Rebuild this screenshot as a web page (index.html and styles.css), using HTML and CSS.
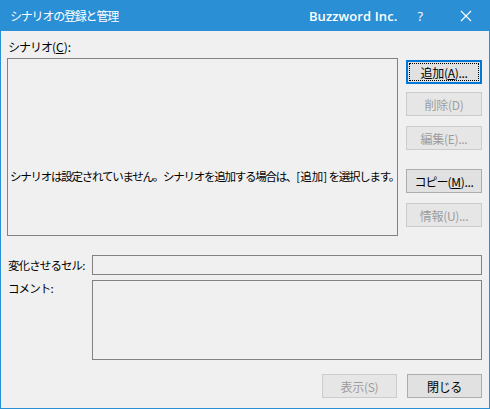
FILE: index.html
```html
<!DOCTYPE html>
<html lang="ja">
<head>
<meta charset="utf-8">
<title>シナリオの登録と管理</title>
<link rel="stylesheet" href="styles.css">
</head>
<body>
<div class="window">
  <div class="titlebar">
    <span class="title">シナリオの登録と管理</span>
    <span class="brand">Buzzword Inc.</span>
    <span class="help">?</span>
    <span class="close">
      <svg width="12" height="12" viewBox="0 0 12 12"><path d="M1 1 L11 11 M11 1 L1 11" stroke="#fff" stroke-width="1.2" fill="none"/></svg>
    </span>
  </div>
  <div class="content">
    <div class="caption"><span class="kana">シナリオ</span>(<u>C</u>):</div>
    <div class="main-row">
      <div class="listbox">
        <span class="empty-msg">シナリオは設定されていません。シナリオを追加する場合は、<span class="bracket">[追加]</span> を選択します。</span>
      </div>
      <div class="side-buttons">
        <button class="btn default"><span class="focus">追加(<u>A</u>)...</span></button>
        <button class="btn disabled gap-s">削除(D)</button>
        <button class="btn disabled gap-m">編集(E)...</button>
        <button class="btn gap-l"><span class="kana">コピー</span>(<u>M</u>)...</button>
        <button class="btn disabled gap-m">情報(U)...</button>
      </div>
    </div>
    <div class="field-row cells">
      <label class="field-label">変化させるセル:</label>
      <div class="input"></div>
    </div>
    <div class="field-row comment">
      <label class="field-label">コメント:</label>
      <div class="textarea"></div>
    </div>
    <div class="footer">
      <button class="btn disabled">表示(S)</button>
      <button class="btn">閉じる</button>
    </div>
  </div>
</div>
</body>
</html>
```

FILE: styles.css
```css
* { box-sizing: border-box; }

html, body {
  margin: 0;
  padding: 0;
  background: #f0f0f0;
}

body {
  font-family: "Noto Sans CJK JP", "Noto Sans", sans-serif;
  font-size: 12px;
  color: #000;
}

.window {
  width: 490px;
  height: 409px;
  border: 1px solid #2b8fd5;
  border-top: 0;
  background: #f0f0f0;
  display: flex;
  flex-direction: column;
}

.titlebar {
  height: 31px;
  background: #2b8fd5;
  color: #fff;
  display: flex;
  align-items: center;
  margin: 0 -1px;
  padding-left: 10px;
}

.title {
  font-size: 12px;
  letter-spacing: -1.2px;
  flex: 1;
}

.brand {
  font-family: "Open Sans", "Liberation Sans", sans-serif;
  font-weight: 600;
  font-size: 13px;
  letter-spacing: 0.1px;
}

.help {
  font-family: "Open Sans", "Liberation Sans", sans-serif;
  font-size: 13px;
  margin-left: 20px;
}

.close {
  display: flex;
  margin-left: 37px;
  margin-right: 18px;
}

.content {
  padding: 0 6px 0 6px;
  display: flex;
  flex-direction: column;
  flex: 1;
}

.kana {
  letter-spacing: -1px;
}

.caption {
  margin-top: 7px;
  height: 20px;
  line-height: 18px;
  padding-left: 1px;
}

.main-row {
  display: flex;
  gap: 8px;
}

/* empty list: the hint sits in the lower part of the box */
.listbox {
  width: 391px;
  height: 178px;
  border: 1px solid #828282;
  padding: 108px 0 0 2px;
  overflow: hidden;
  line-height: 17px;
}

.empty-msg {
  font-size: 11.5px;
  letter-spacing: -1.25px;
  white-space: nowrap;
}

.bracket {
  letter-spacing: 0;
}

.side-buttons {
  display: flex;
  flex-direction: column;
  padding-top: 2px;
}

.btn {
  width: 76px;
  height: 24px;
  border: 1px solid #adadad;
  background: #e1e1e1;
  font-family: inherit;
  font-size: 12px;
  color: #000;
  padding: 0;
  margin: 0;
  letter-spacing: -0.3px;
  display: flex;
  align-items: center;
  justify-content: center;
}

.btn.default {
  border: 2px solid #0078d7;
  padding: 1px;
}

.btn .focus {
  flex: 1;
  align-self: stretch;
  display: flex;
  align-items: center;
  justify-content: center;
  outline: 1px dotted #000;
  outline-offset: -1px;
}

.btn.disabled {
  background: #e6e6e6;
  border-color: #cccccc;
  color: #9d9d9d;
}

.gap-s { margin-top: 8px; }
.gap-m { margin-top: 10px; }
.gap-l { margin-top: 19px; }

.field-row {
  display: flex;
}

.field-label {
  width: 85px;
  padding-left: 1px;
  font-size: 11.5px;
  letter-spacing: -0.9px;
}

.cells {
  margin-top: 19px;
  align-items: center;
}

.input {
  width: 390px;
  height: 20px;
  border: 1px solid #828282;
}

.comment {
  margin-top: 5px;
}

.comment .field-label {
  padding-top: 0;
  line-height: 16px;
}

.textarea {
  width: 390px;
  height: 80px;
  border: 1px solid #828282;
}

.footer {
  display: flex;
  justify-content: flex-end;
  gap: 10px;
  margin-top: 14px;
  padding-right: 1px;
}

.footer .btn {
  width: 75px;
}
```
